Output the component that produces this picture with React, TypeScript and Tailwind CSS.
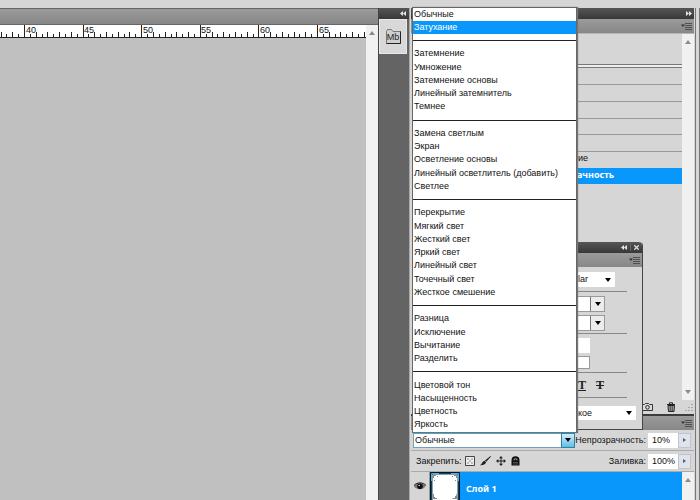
import { useEffect, useRef, useState } from "react";

const MODES = [
  ["Обычные", "Затухание"],
  ["Затемнение", "Умножение", "Затемнение основы", "Линейный затемнитель", "Темнее"],
  ["Замена светлым", "Экран", "Осветление основы", "Линейный осветлитель (добавить)", "Светлее"],
  ["Перекрытие", "Мягкий свет", "Жесткий свет", "Яркий свет", "Линейный свет", "Точечный свет", "Жесткое смешение"],
  ["Разница", "Исключение", "Вычитание", "Разделить"],
  ["Цветовой тон", "Насыщенность", "Цветность", "Яркость"],
];

const HISTORY = ["", "", "", "", "", "ие"];

const UNIT = 11.72;
const RULER_START = 24.5;

function Ruler() {
  const ref = useRef<SVGSVGElement>(null);
  const [width, setWidth] = useState(366);

  useEffect(() => {
    const ro = new ResizeObserver(([e]) => setWidth(e.contentRect.width));
    if (ref.current) ro.observe(ref.current);
    return () => ro.disconnect();
  }, []);

  const count = Math.ceil(((width - RULER_START) * 2) / UNIT) + 4;
  const ticks = Array.from({ length: count }, (_, i) => i - 4);
  return (
    <svg ref={ref} className="h-[13px] w-full block overflow-visible bg-white border-b border-[#222]" aria-hidden="true">
      {ticks.map((i) => {
        const x = Math.round(RULER_START + (i * UNIT) / 2 - 0.5) + 0.5;
        const top = i % 10 === 0 ? 0 : i % 2 === 0 ? 7 : 9;
        return <line key={i} x1={x} x2={x} y1={top} y2={13} stroke="#222" />;
      })}
      {ticks.filter((i) => i % 10 === 0).map((i) => (
        <text key={i} x={Math.round(RULER_START + (i * UNIT) / 2) + 1} y={8} fontSize={9} fill="#111">{40 + i / 2}</text>
      ))}
    </svg>
  );
}

function Caret({ className = "" }: { className?: string }) {
  return <svg viewBox="0 0 6 4" className={"w-[6px] h-[4px] shrink-0 " + className}><path d="M0 0h6L3 4z" fill="currentColor" /></svg>;
}

function Chevrons({ right = false }: { right?: boolean }) {
  return (
    <svg viewBox="0 0 6 5" className={"w-[6px] h-[5px] text-[#e4e4e4] " + (right ? "rotate-180" : "")}>
      <path d="M3 0v5L0 2.5zM6 0v5L3 2.5z" fill="currentColor" />
    </svg>
  );
}

function MenuIcon() {
  return (
    <svg viewBox="0 0 11 7" className="w-[11px] h-[7px]">
      <path d="M0 1.500h4L2 4z" fill="#333" />
      <path d="M4 .5h7M4 2.500h7M4 4.500h7M4 6.500h7" stroke="#505050" strokeWidth="1" />
    </svg>
  );
}

function Scrollbar({ down = false }: { down?: boolean }) {
  return (
    <div className="w-[12px] shrink-0 bg-[#f1f1f1] flex flex-col items-center justify-between py-[6px] text-[#8a8a8a]">
      <Caret className="rotate-180" />
      {down && <Caret />}
    </div>
  );
}

function TabBar() {
  return (
    <div className="h-[14px] shrink-0 flex items-center justify-end pr-[2px] bg-linear-to-b from-[#9b9b9b] to-[#878787]">
      <button aria-label="Меню панели"><MenuIcon /></button>
    </div>
  );
}

function Combo({ label }: { label: string }) {
  return (
    <div className="flex h-[16px] w-[28px] border border-[#999]">
      <input aria-label={label} className="w-[12px] min-w-0 bg-white" />
      <button aria-label={label + " список"} className="flex-1 flex items-center justify-center border-l border-[#777] bg-[#ececec]"><Caret className="text-black" /></button>
    </div>
  );
}

function CharacterPanel() {
  return (
    <div className="absolute right-[57px] top-[242px] z-10 w-[66px] h-[188px] flex flex-col bg-[#d6d6d6] border-r border-b border-[#444] rounded-tr">
      <div className="h-[11px] shrink-0 rounded-tr bg-linear-to-b from-[#565656] to-[#383838] flex items-center justify-end gap-[3px] pr-[3px]">
        <Chevrons />
        <span className="w-px h-[7px] bg-[#666]" />
        <button aria-label="Закрыть">
          <svg viewBox="0 0 5 5" className="w-[5px] h-[5px]"><path d="M.3.3l4.400 4.400M4.700.3L.3 4.700" stroke="#ddd" strokeWidth="1.300" /></svg>
        </button>
      </div>
      <TabBar />
      <div className="relative mt-[5px] w-[38px] h-[15px] flex items-center">
        <select aria-label="Начертание" className="appearance-none w-full h-full bg-white pl-px">
          <option>lar</option>
        </select>
        <Caret className="absolute right-1 text-black pointer-events-none" />
      </div>
      <hr className="mt-1 w-[50px] border-[#888]" />
      <div className="mt-1"><Combo label="Интерлиньяж" /></div>
      <div className="mt-[3px]"><Combo label="Трекинг" /></div>
      <hr className="mt-[2px] w-[50px] border-[#888]" />
      <input aria-label="Масштаб" className="mt-1 w-[13px] h-[15px] bg-white" />
      <input aria-label="Сдвиг" className="mt-[3px] w-[13px] h-[13px] bg-white border border-[#999]" />
      <hr className="mt-[3px] w-[50px] border-[#888]" />
      <div className="h-6 flex items-center gap-[10px] pl-px font-['Liberation_Serif',serif] font-bold text-[12px] text-[#222]">
        <button className="underline">T</button>
        <button className="line-through">T</button>
      </div>
      <hr className="w-[50px] border-[#888]" />
      <div className="relative mt-[8px] w-[59px] h-[14px] flex items-center">
        <select aria-label="Язык" className="appearance-none w-full h-full bg-white pl-px">
          <option>кое</option>
        </select>
        <Caret className="absolute right-1 text-black pointer-events-none" />
      </div>
    </div>
  );
}

function Percent({ id, label, value }: { id: string; label: string; value: string }) {
  return (
    <div className="flex items-center">
      <label htmlFor={id} className="pr-[2px]">{label}</label>
      <input id={id} defaultValue={value} className="w-[30px] h-[15px] bg-white pl-1" />
      <button aria-label={label} className="w-[13px] h-[15px] flex items-center justify-center bg-[#dfe3ec] border border-[#c0c4cc]">
        <svg viewBox="0 0 3 4" className="w-[3px] h-[4px]"><path d="M0 0l3 2-3 2z" fill="#555c70" /></svg>
      </button>
    </div>
  );
}

function BlendMenu({ mode, onPick }: { mode: string; onPick: (m: string) => void }) {
  return (
    <ul className="absolute bottom-full -left-px z-20 w-[165px] h-[426px] flex flex-col bg-white border border-[#666] border-b-[#4d7f95] shadow-[1px_0_1px_#777]">
      {MODES.map((group, i) => [
        i > 0 && <li key={"sep" + i} className="flex-1 flex items-center"><hr className="w-full border-[#222]" /></li>,
        ...group.map((m) => (
          <li key={m} className="flex-1 flex">
            <button onClick={() => onPick(m)} className={"w-full pl-px text-left leading-[13px] whitespace-nowrap " + (m === mode ? "bg-[#0a97fb] text-white" : "")}>{m}</button>
          </li>
        )),
      ])}
    </ul>
  );
}

function LayersPanel() {
  const [mode, setMode] = useState("Затухание");
  return (
    <div className="shrink-0 flex flex-col border-t-2 border-[#3c3c3c]">
      <TabBar />
      <div className="h-[21px] flex items-center justify-between pl-[2px] pr-[3px] border-b border-[#aaa]">
        <div className="relative w-[162px] shrink-0 h-[15px] flex">
          <select aria-label="Режим наложения" className="appearance-none flex-1 bg-white border border-[#6fa3ba] pl-px">
            <option>Обычные</option>
          </select>
          <div className="absolute right-0 w-[14px] h-[15px] flex items-center justify-center border border-[#3580a0] bg-linear-to-b from-[#d0effb] to-[#5cbde4] pointer-events-none">
            <Caret className="text-black" />
          </div>
          <BlendMenu mode={mode} onPick={setMode} />
        </div>
        <Percent id="opacity" label="Непрозрачность:" value="10%" />
      </div>
      <div className="h-[21px] flex items-center justify-between pl-[5px] pr-[3px] border-b border-[#aaa]">
        <div className="flex items-center gap-[5px]">
          <span className="w-[44px]">Закрепить:</span>
          <button aria-label="Прозрачные пиксели">
            <svg viewBox="0 0 10 10" className="w-[10px] h-[10px]"><path d="M.5.5h9v9h-9z" fill="#eee" stroke="#444" /><path d="M2 2h2v2H2zM6 2h2v2H6zM4 4h2v2H4zM2 6h2v2H2zM6 6h2v2H6z" fill="#bbb" /></svg>
          </button>
          <button aria-label="Цвета изображения">
            <svg viewBox="0 0 11 10" className="w-[11px] h-[10px]"><path d="M10.500 0L5 4.500l1.300 1.300L11 .5z" fill="#222" /><path d="M4.600 4.800l1.500 1.500C5.500 8.500 3 9.500 0 9.300 2 8.500 2 5.500 4.600 4.800z" fill="#222" /></svg>
          </button>
          <button aria-label="Положение">
            <svg viewBox="0 0 10 10" className="w-[10px] h-[10px]"><path d="M5 1v8M1 5h8" stroke="#222" /><path d="M5 0l2 2.300H3zM5 10l2-2.300H3zM0 5l2.300-2v4zM10 5L7.700 3v4z" fill="#222" /></svg>
          </button>
          <button aria-label="Закрепить все">
            <svg viewBox="0 0 9 10" className="w-[9px] h-[10px]"><path d="M.5 9.500V4a4 3.800 0 018 0v5.500z" fill="#111" /><path d="M3 4.300a1.500 1.600 0 013 0" fill="none" stroke="#ccc" strokeWidth=".9" /><path d="M2 6.500h5M2 8h5" stroke="#777" strokeWidth=".6" /></svg>
          </button>
        </div>
        <Percent id="fill" label="Заливка:" value="100%" />
      </div>
      <div className="h-[28px] overflow-hidden flex">
        <div className="flex-1 flex bg-[#0a97fb]">
          <button aria-label="Видимость" className="w-[19px] bg-[#d6d6d6] border-r border-[#999] flex items-center justify-center">
            <svg viewBox="0 0 12 8" className="w-[12px] h-[8px]"><path d="M0 4.500C2 .5 9 .2 11.500 4 9.500 8 3 8.500 0 4.500z" fill="#777" /><path d="M0 3.500C3 0 9 0 12 3.500" fill="none" stroke="#111" /><circle cx="6" cy="4.200" r="2.800" fill="#111" /><circle cx="5.200" cy="3.400" r=".7" fill="#eee" /></svg>
          </button>
          <svg viewBox="0 0 30 30" className="w-[30px] h-[30px] shrink-0">
            <path d="M.5.5h29v29H.5z" fill="#08456c" stroke="#111" />
            <path d="M1.500 9V1.500H9M21 1.500h7.500V9" fill="none" stroke="#3cb4f5" />
            <path d="M2.500 2.500h25v26h-25z" fill="#fff" />
            <path d="M3 3h3v1H4v2H3zM27 3h-3v1h2v2h1zM7 4h1v1H7zM22 4h1v1h-1zM4 8h1v1H4zM25 8h1v1h-1zM27 21v6h-5l1-1h2v-2h1zM3 22v5h4v-1H5v-1H4v-3z" fill="#888" />
          </svg>
          <span className="pl-[6px] pt-[10px] font-['Noto_Sans',sans-serif] font-bold leading-[14px] text-white">Слой 1</span>
        </div>
        <Scrollbar />
      </div>
    </div>
  );
}

function HistoryPanel() {
  return (
    <div className="flex-1 min-h-0 flex flex-col">
      <div className="h-[11px] shrink-0 flex items-center justify-end pr-[2px] bg-linear-to-b from-[#565656] to-[#383838]"><Chevrons right /></div>
      <TabBar />
      <div className="flex-1 min-h-0 flex border-t border-[#b8b8b8]">
        <div className="flex-1 pl-[166px] pt-[30px]">
          <hr className="h-[4px] border-y border-[#777] bg-[#eee]" />
          <ul className="h-[116px] flex flex-col">
            {HISTORY.map((step, i) => (
              <li key={i} className={"flex-1 pl-px leading-[13px] " + (i < 5 ? "border-b border-[#999]" : "")}>{step}</li>
            ))}
            <li className="flex-1 leading-[13px] bg-[#0a97fb] font-['Noto_Sans',sans-serif] font-bold text-white">ачность</li>
          </ul>
        </div>
        <Scrollbar down />
      </div>
      <div className="h-[14px] shrink-0 flex items-center justify-end pr-px">
        <button aria-label="Новый снимок" className="mr-[14px]">
          <svg viewBox="0 0 11 8" className="w-[11px] h-[8px]"><path d="M.5 1.500h2l1-1h3l1 1h3v6H.5z" fill="#ddd" stroke="#333" /><circle cx="5.500" cy="4.300" r="1.800" fill="none" stroke="#222" /></svg>
        </button>
        <button aria-label="Удалить" className="mr-2">
          <svg viewBox="0 0 9 10" className="w-[9px] h-[10px]"><path d="M0 2.500h8M2.500 2V.8h3V2" fill="none" stroke="#222" /><path d="M1 3.500h6.500L7 9.500H1.500z" fill="#aaa" stroke="#222" /><path d="M3.200 4v5M5.200 4v5" stroke="#222" strokeWidth=".8" /></svg>
        </button>
        <svg viewBox="0 0 9 9" className="w-[9px] h-[9px]"><path d="M8 1v1M8 4v1M8 7v1M5 4v1M5 7v1M2 7v1" stroke="#999" strokeWidth="1.500" /></svg>
      </div>
    </div>
  );
}

export default function App() {
  return (
    <div className="relative h-screen overflow-hidden flex flex-col bg-[#d6d6d6] font-['Liberation_Sans',Arial,sans-serif] text-[9px] leading-[13px] text-[#111]">
      <div className="h-2 shrink-0" />
      <div className="flex-1 min-h-0 flex">
        <main className="flex-1 min-w-0 flex flex-col bg-[#c0c0c0]">
          <div className="h-[17px] shrink-0 border-y border-[#666] bg-linear-to-b from-[#9b9b9b] to-[#878787]" />
          <div className="flex-1 flex">
            <div className="flex-1 min-w-0"><Ruler /></div>
            <Scrollbar />
          </div>
        </main>
        <aside className="w-[31px] shrink-0 flex flex-col bg-[#646464] border-l border-[#444]">
          <div className="h-[11px] flex items-center justify-end pr-[3px] bg-linear-to-b from-[#565656] to-[#383838]"><Chevrons /></div>
          <div className="h-[35px] mr-[2px] flex items-center justify-center bg-[#d8d8d8] border border-[#e8e8e8]">
            <button className="relative flex items-center justify-center w-[15px] h-[15px]" aria-label="Mini Bridge">
              <svg viewBox="0 0 15 15" className="absolute inset-0"><path d="M.5 2.500l1-2h4l1.500 2h7.500v12H.5z" fill="#cfcfcf" stroke="#777" /><path d="M.5 14.500h14v-12" fill="none" stroke="#222" /></svg>
              <span className="relative pt-px text-[9px] leading-[13px] text-[#222]">Mb</span>
            </button>
          </div>
        </aside>
        <aside className="w-[291px] shrink-0 flex border-l border-[#aaa]">
          <div className="flex-1 min-w-0 flex flex-col pl-px">
            <HistoryPanel />
            <LayersPanel />
          </div>
          <div className="w-[5px] ml-px border-x border-[#777]" />
        </aside>
      </div>
      <CharacterPanel />
    </div>
  );
}
